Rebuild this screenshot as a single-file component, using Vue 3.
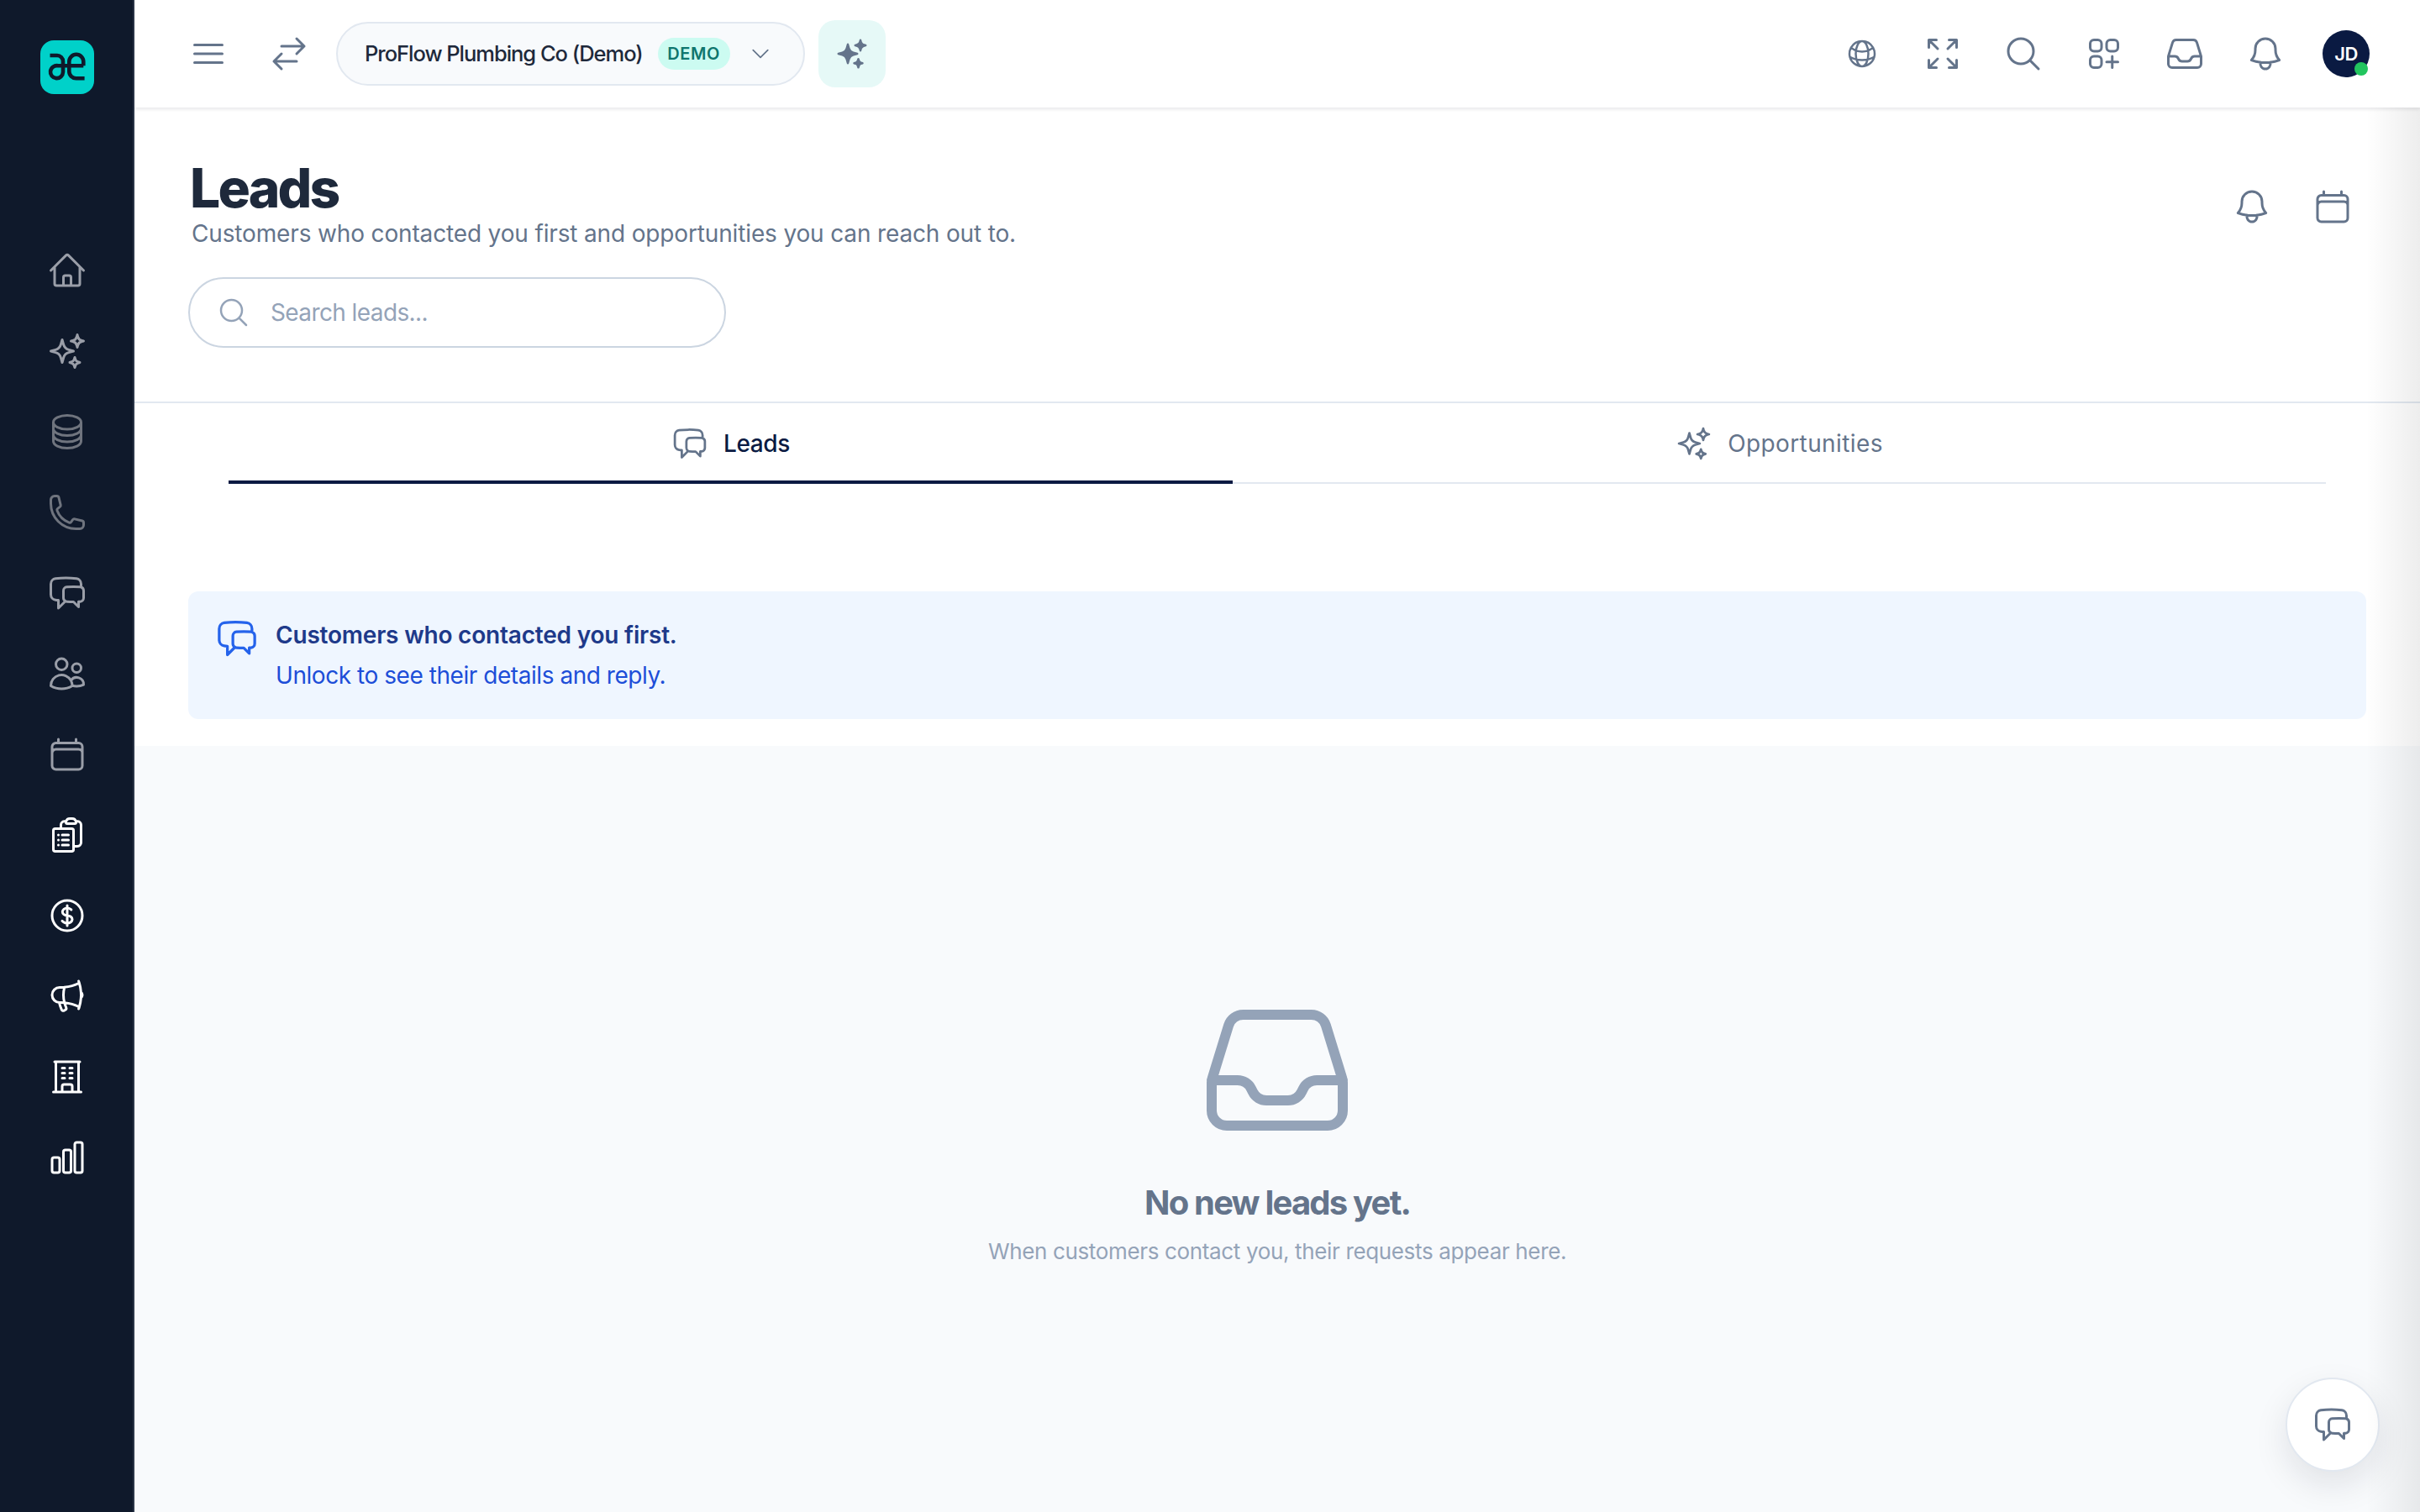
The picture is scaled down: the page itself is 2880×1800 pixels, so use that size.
<template>
  <div class="app">
    <aside class="sidebar">
      <div class="logo">
        <svg viewBox="0 0 64 64" class="logo-mark">
          <path d="M11.5 18H20a7 7 0 0 1 7 7v13M51.3 30.3H21a7.5 7.5 0 1 0 6 7.5M51.3 30.3v-5a8.5 8.5 0 0 0-17 0V37a8.3 8.3 0 0 0 8.3 8.3h10" />
        </svg>
      </div>
      <nav class="nav">
        <a v-for="item in navItems" :key="item.name" class="nav-item" :class="item.tone">
          <svg class="ic" viewBox="0 0 24 24"><path :d="icons[item.name]" /></svg>
        </a>
      </nav>
    </aside>

    <div class="main">
      <header class="topbar">
        <button type="button" class="top-btn"><svg class="ic" viewBox="0 0 24 24"><path :d="icons.menu" /></svg></button>
        <button type="button" class="top-btn swap"><svg class="ic" viewBox="0 0 24 24"><path :d="icons.swap" /></svg></button>
        <div class="company">
          <span class="company-name">ProFlow Plumbing Co (Demo)</span>
          <span class="badge">DEMO</span>
          <svg class="ic chevron" viewBox="0 0 24 24"><path :d="icons.chevron" /></svg>
        </div>
        <button type="button" class="spark-btn">
          <svg viewBox="0 0 24 24" class="spark-solid"><path :d="icons.sparkSolid" /></svg>
        </button>
        <div class="top-right">
          <button type="button" class="top-btn"><svg class="ic globe" viewBox="0 0 24 24"><path :d="icons.globe" /></svg></button>
          <button v-for="name in topIcons" :key="name" type="button" class="top-btn">
            <svg class="ic" viewBox="0 0 24 24"><path :d="icons[name]" /></svg>
          </button>
          <div class="avatar">JD<span class="status"></span></div>
        </div>
      </header>

      <section class="page-head">
        <div>
          <h1>Leads</h1>
          <p class="subtitle">Customers who contacted you first and opportunities you can reach out to.</p>
          <label class="search">
            <svg class="ic search-ic" viewBox="0 0 24 24"><path :d="icons.search" /></svg>
            <input type="text" placeholder="Search leads..." />
          </label>
        </div>
        <div class="head-actions">
          <button type="button" class="top-btn"><svg class="ic" viewBox="0 0 24 24"><path :d="icons.bell" /></svg></button>
          <button type="button" class="top-btn"><svg class="ic" viewBox="0 0 24 24"><path :d="icons.calendar" /></svg></button>
        </div>
      </section>

      <section class="tabs-area">
        <div class="tabs">
          <button type="button" class="tab active">
            <svg class="ic tab-ic" viewBox="0 0 24 24"><path :d="icons.chat" /></svg>
            Leads
          </button>
          <button type="button" class="tab">
            <svg class="ic tab-ic" viewBox="0 0 24 24"><path :d="icons.sparkles" /></svg>
            Opportunities
          </button>
        </div>
        <div class="info">
          <svg class="ic info-ic" viewBox="0 0 24 24"><path :d="icons.chat" /></svg>
          <div>
            <p class="info-title">Customers who contacted you first.</p>
            <p class="info-text">Unlock to see their details and reply.</p>
          </div>
        </div>
      </section>

      <section class="empty">
        <svg class="ic empty-ic" viewBox="0 0 24 24"><path :d="icons.inbox" /></svg>
        <h2>No new leads yet.</h2>
        <p>When customers contact you, their requests appear here.</p>
      </section>
    </div>

    <button type="button" class="fab"><svg class="ic" viewBox="0 0 24 24"><path :d="icons.chat" /></svg></button>
    <div class="edge-shade"></div>
  </div>
</template>

<script setup>
const icons = {
  home: 'm2.25 12 8.954-8.955c.44-.439 1.152-.439 1.591 0L21.75 12M4.5 9.75v10.125c0 .621.504 1.125 1.125 1.125H9.75v-4.875c0-.621.504-1.125 1.125-1.125h2.25c.621 0 1.125.504 1.125 1.125V21h4.125c.621 0 1.125-.504 1.125-1.125V9.75M8.25 21h8.25',
  sparkles: 'M9.813 15.904 9 18.75l-.813-2.846a4.5 4.5 0 0 0-3.09-3.09L2.25 12l2.846-.813a4.5 4.5 0 0 0 3.09-3.09L9 5.25l.813 2.846a4.5 4.5 0 0 0 3.09 3.09L15.75 12l-2.846.813a4.5 4.5 0 0 0-3.09 3.09ZM18.259 8.715 18 9.75l-.259-1.035a3.375 3.375 0 0 0-2.455-2.456L14.25 6l1.036-.259a3.375 3.375 0 0 0 2.455-2.456L18 2.25l.259 1.035a3.375 3.375 0 0 0 2.456 2.456L21.75 6l-1.035.259a3.375 3.375 0 0 0-2.456 2.456ZM16.894 20.567 16.5 21.75l-.394-1.183a2.25 2.25 0 0 0-1.423-1.423L13.5 18.75l1.183-.394a2.25 2.25 0 0 0 1.423-1.423l.394-1.183.394 1.183a2.25 2.25 0 0 0 1.423 1.423l1.183.394-1.183.394a2.25 2.25 0 0 0-1.423 1.423Z',
  database: 'M20.25 6.375c0 2.278-3.694 4.125-8.25 4.125S3.75 8.653 3.75 6.375m16.5 0c0-2.278-3.694-4.125-8.25-4.125S3.75 4.097 3.75 6.375m16.5 0v11.25c0 2.278-3.694 4.125-8.25 4.125s-8.25-1.847-8.25-4.125V6.375m16.5 0v3.75m-16.5-3.75v3.75m16.5 0v3.75C20.25 16.153 16.556 18 12 18s-8.25-1.847-8.25-4.125v-3.75m16.5 0c0 2.278-3.694 4.125-8.25 4.125s-8.25-1.847-8.25-4.125',
  phone: 'M2.25 6.75c0 8.284 6.716 15 15 15h2.25a2.25 2.25 0 0 0 2.25-2.25v-1.372c0-.516-.351-.966-.852-1.091l-4.423-1.106c-.44-.11-.902.055-1.173.417l-.97 1.293c-.282.376-.769.542-1.21.38a12.035 12.035 0 0 1-7.143-7.143c-.162-.441.004-.928.38-1.21l1.293-.97c.363-.271.527-.734.417-1.173L6.963 3.102a1.125 1.125 0 0 0-1.091-.852H4.5A2.25 2.25 0 0 0 2.25 4.5v2.25Z',
  chat: 'M20.25 8.511c.884.284 1.5 1.128 1.5 2.097v4.286c0 1.136-.847 2.1-1.98 2.193-.34.027-.68.052-1.02.072v3.091l-3-3c-1.354 0-2.694-.055-4.02-.163a2.115 2.115 0 0 1-.825-.242m9.345-8.334a2.126 2.126 0 0 0-.476-.095 48.64 48.64 0 0 0-8.048 0c-1.131.094-1.976 1.057-1.976 2.192v4.286c0 .837.46 1.58 1.155 1.951m9.345-8.334V6.637c0-1.621-1.152-3.026-2.76-3.235A48.455 48.455 0 0 0 11.25 3c-2.115 0-4.198.137-6.24.402-1.608.209-2.76 1.614-2.76 3.235v6.226c0 1.621 1.152 3.026 2.76 3.235.577.075 1.157.14 1.74.194V21l4.155-4.155',
  users: 'M15 19.128a9.38 9.38 0 0 0 2.625.372 9.337 9.337 0 0 0 4.121-.952 4.125 4.125 0 0 0-7.533-2.493M15 19.128v-.003c0-1.113-.285-2.16-.786-3.07M15 19.128v.106A12.318 12.318 0 0 1 8.624 21c-2.331 0-4.512-.645-6.374-1.766l-.001-.109a6.375 6.375 0 0 1 11.964-3.07M12 6.375a3.375 3.375 0 1 1-6.75 0 3.375 3.375 0 0 1 6.75 0Zm8.25 2.25a2.625 2.625 0 1 1-5.25 0 2.625 2.625 0 0 1 5.25 0Z',
  calendar: 'M6.75 3v2.25M17.25 3v2.25M3 18.75V7.5a2.25 2.25 0 0 1 2.25-2.25h13.5A2.25 2.25 0 0 1 21 7.5v11.25m-18 0A2.25 2.25 0 0 0 5.25 21h13.5A2.25 2.25 0 0 0 21 18.75m-18 0v-7.5A2.25 2.25 0 0 1 5.25 9h13.5A2.25 2.25 0 0 1 21 11.25v7.5',
  clipboard: 'M9 12h3.75M9 15h3.75M9 18h3.75m3 .75H18a2.25 2.25 0 0 0 2.25-2.25V6.108c0-1.135-.845-2.098-1.976-2.192a48.424 48.424 0 0 0-1.123-.08m-5.801 0c-.065.21-.1.433-.1.664 0 .414.336.75.75.75h4.5a.75.75 0 0 0 .75-.75 2.25 2.25 0 0 0-.1-.664m-5.8 0A2.251 2.251 0 0 1 13.5 2.25H15c1.012 0 1.867.668 2.15 1.586m-5.8 0c-.376.023-.75.05-1.124.08C9.095 4.01 8.25 4.973 8.25 6.108V8.25m0 0H4.875c-.621 0-1.125.504-1.125 1.125v11.25c0 .621.504 1.125 1.125 1.125h9.75c.621 0 1.125-.504 1.125-1.125V9.375c0-.621-.504-1.125-1.125-1.125H8.25ZM6.75 12h.008v.008H6.75V12Zm0 3h.008v.008H6.75V15Zm0 3h.008v.008H6.75V18Z',
  dollar: 'M12 6v12m-3-2.818.879.659c1.171.879 3.07.879 4.242 0 1.172-.879 1.172-2.303 0-3.182C13.536 12.219 12.768 12 12 12c-.725 0-1.45-.22-2.003-.659-1.106-.879-1.106-2.303 0-3.182s2.9-.879 4.006 0l.415.33M21 12a9 9 0 1 1-18 0 9 9 0 0 1 18 0Z',
  megaphone: 'M10.34 15.84c-.688-.06-1.386-.09-2.09-.09H7.5a4.5 4.5 0 1 1 0-9h.75c.704 0 1.402-.03 2.09-.09m0 9.18c.253.962.584 1.892.985 2.783.247.55.06 1.21-.463 1.511l-.657.38c-.551.318-1.26.117-1.527-.461a20.845 20.845 0 0 1-1.44-4.282m3.102.069a18.03 18.03 0 0 1-.59-4.59c0-1.586.205-3.124.59-4.59m0 9.18a23.848 23.848 0 0 1 8.835 2.535M10.34 6.66a23.847 23.847 0 0 0 8.835-2.535m0 0A23.74 23.74 0 0 0 18.795 3m.38 1.125a23.91 23.91 0 0 1 1.014 5.395m-1.014 8.855c-.118.38-.245.754-.38 1.125m.38-1.125a23.91 23.91 0 0 0 1.014-5.395m0-3.46c.495.413.811 1.035.811 1.73 0 .695-.316 1.317-.811 1.73m0-3.46a24.347 24.347 0 0 1 0 3.46',
  building: 'M3.75 21h16.5M4.5 3h15M5.25 3v18m13.5-18v18M9 6.75h1.5m-1.5 3h1.5m-1.5 3h1.5m3-6H15m-1.5 3H15m-1.5 3H15M9 21v-3.375c0-.621.504-1.125 1.125-1.125h3.75c.621 0 1.125.504 1.125 1.125V21',
  chart: 'M3 13.125C3 12.504 3.504 12 4.125 12h2.25c.621 0 1.125.504 1.125 1.125v6.75C7.5 20.496 6.996 21 6.375 21h-2.25A1.125 1.125 0 0 1 3 19.875v-6.75ZM9.75 8.625c0-.621.504-1.125 1.125-1.125h2.25c.621 0 1.125.504 1.125 1.125v11.25c0 .621-.504 1.125-1.125 1.125h-2.25a1.125 1.125 0 0 1-1.125-1.125V8.625ZM16.5 4.125c0-.621.504-1.125 1.125-1.125h2.25C20.496 3 21 3.504 21 4.125v15.75c0 .621-.504 1.125-1.125 1.125h-2.25a1.125 1.125 0 0 1-1.125-1.125V4.125Z',
  menu: 'M3.75 6.75h16.5M3.75 12h16.5m-16.5 5.25h16.5',
  swap: 'M7.5 21 3 16.5m0 0L7.5 12M3 16.5h13.5m0-13.5L21 7.5m0 0L16.5 12M21 7.5H7.5',
  chevron: 'm19.5 8.25-7.5 7.5-7.5-7.5',
  globe: 'M12 21a9.004 9.004 0 0 0 8.716-6.747M12 21a9.004 9.004 0 0 1-8.716-6.747M12 21c2.485 0 4.5-4.03 4.5-9S14.485 3 12 3m0 18c-2.485 0-4.5-4.03-4.5-9S9.515 3 12 3m0 0a8.997 8.997 0 0 1 7.843 4.582M12 3a8.997 8.997 0 0 0-7.843 4.582m15.686 0A11.953 11.953 0 0 1 12 10.5c-2.998 0-5.74-1.1-7.843-2.918m15.686 0A8.959 8.959 0 0 1 21 12c0 .778-.099 1.533-.284 2.253m0 0A17.919 17.919 0 0 1 12 16.5c-3.162 0-6.133-.815-8.716-2.247m0 0A9.004 9.004 0 0 1 3 12c0-1.605.42-3.113 1.157-4.418',
  expand: 'M3.75 3.75v4.5m0-4.5h4.5m-4.5 0L9 9M3.75 20.25v-4.5m0 4.5h4.5m-4.5 0L9 15M20.25 3.75h-4.5m4.5 0v4.5m0-4.5L15 9m5.25 11.25h-4.5m4.5 0v-4.5m0 4.5L15 15',
  search: 'm21 21-5.197-5.197m0 0A7.5 7.5 0 1 0 5.196 5.196a7.5 7.5 0 0 0 10.607 10.607Z',
  apps: 'M13.5 16.875h3.375m0 0h3.375m-3.375 0V13.5m0 3.375v3.375M6 10.5h2.25a2.25 2.25 0 0 0 2.25-2.25V6a2.25 2.25 0 0 0-2.25-2.25H6A2.25 2.25 0 0 0 3.75 6v2.25A2.25 2.25 0 0 0 6 10.5Zm0 9.75h2.25A2.25 2.25 0 0 0 10.5 18v-2.25a2.25 2.25 0 0 0-2.25-2.25H6a2.25 2.25 0 0 0-2.25 2.25V18A2.25 2.25 0 0 0 6 20.25Zm9.75-9.75H18a2.25 2.25 0 0 0 2.25-2.25V6A2.25 2.25 0 0 0 18 3.75h-2.25A2.25 2.25 0 0 0 13.5 6v2.25a2.25 2.25 0 0 0 2.25 2.25Z',
  inbox: 'M2.25 13.5h3.86a2.25 2.25 0 0 1 2.012 1.244l.256.512a2.25 2.25 0 0 0 2.013 1.244h3.218a2.25 2.25 0 0 0 2.013-1.244l.256-.512a2.25 2.25 0 0 1 2.013-1.244h3.859m-19.5.338V18a2.25 2.25 0 0 0 2.25 2.25h15A2.25 2.25 0 0 0 21.75 18v-4.162c0-.224-.034-.447-.1-.661L19.24 5.338a2.25 2.25 0 0 0-2.15-1.588H6.911a2.25 2.25 0 0 0-2.15 1.588L2.35 13.177a2.25 2.25 0 0 0-.1.661Z',
  bell: 'M14.857 17.082a23.848 23.848 0 0 0 5.454-1.31A8.967 8.967 0 0 1 18 9.75V9A6 6 0 0 0 6 9v.75a8.967 8.967 0 0 1-2.312 6.022c1.733.64 3.56 1.085 5.455 1.31m5.714 0a24.255 24.255 0 0 1-5.714 0m5.714 0a3 3 0 1 1-5.714 0',
  sparkSolid: 'M9 4.5a.75.75 0 0 1 .721.544l.813 2.846a3.75 3.75 0 0 0 2.576 2.576l2.846.813a.75.75 0 0 1 0 1.442l-2.846.813a3.75 3.75 0 0 0-2.576 2.576l-.813 2.846a.75.75 0 0 1-1.442 0l-.813-2.846a3.75 3.75 0 0 0-2.576-2.576l-2.846-.813a.75.75 0 0 1 0-1.442l2.846-.813A3.75 3.75 0 0 0 7.466 7.89l.813-2.846A.75.75 0 0 1 9 4.5ZM18 1.5a.75.75 0 0 1 .728.568l.258 1.036c.236.94.97 1.674 1.91 1.91l1.036.258a.75.75 0 0 1 0 1.456l-1.036.258c-.94.236-1.674.97-1.91 1.91l-.258 1.036a.75.75 0 0 1-1.456 0l-.258-1.036a2.625 2.625 0 0 0-1.91-1.91l-1.036-.258a.75.75 0 0 1 0-1.456l1.036-.258a2.625 2.625 0 0 0 1.91-1.91l.258-1.036A.75.75 0 0 1 18 1.5ZM16.5 15a.75.75 0 0 1 .712.513l.394 1.183c.15.447.5.799.948.948l1.183.395a.75.75 0 0 1 0 1.422l-1.183.395c-.447.15-.799.5-.948.948l-.395 1.183a.75.75 0 0 1-1.422 0l-.395-1.183a1.5 1.5 0 0 0-.948-.948l-1.183-.395a.75.75 0 0 1 0-1.422l1.183-.395c.447-.15.799-.5.948-.948l.395-1.183A.75.75 0 0 1 16.5 15Z'
}

const navItems = [
  { name: 'home', tone: 'mid' },
  { name: 'sparkles', tone: 'mid' },
  { name: 'database', tone: 'dim' },
  { name: 'phone', tone: 'dim' },
  { name: 'chat', tone: 'mid' },
  { name: 'users', tone: 'mid' },
  { name: 'calendar', tone: 'mid' },
  { name: 'clipboard', tone: 'bright' },
  { name: 'dollar', tone: 'bright' },
  { name: 'megaphone', tone: 'bright' },
  { name: 'building', tone: 'bright' },
  { name: 'chart', tone: 'bright' }
]

const topIcons = ['expand', 'search', 'apps', 'inbox', 'bell']
</script>

<style>
html, body { margin: 0; background: #fff; }
</style>

<style scoped>
* { box-sizing: border-box; }

.app {
  position: relative; display: flex; height: 100vh; overflow: hidden;
  font-family: Inter, "Liberation Sans", sans-serif; color: #1e293b; letter-spacing: -.15px;
}

.ic { display: block; width: 48px; height: 48px; fill: none; stroke: currentColor; stroke-width: 1.5; stroke-linecap: round; stroke-linejoin: round; }

/* sidebar */
.sidebar { flex: 0 0 160px; background: #0f192b; border-right: 2px solid #2a3547; }
.logo { width: 64px; height: 64px; margin: 48px 0 0 48px; border-radius: 16px; background: #00d1c9; }
.logo-mark { display: block; width: 64px; height: 64px; fill: none; stroke: #0f192b; stroke-width: 4.6; stroke-linejoin: round; }
.nav { display: flex; flex-direction: column; align-items: center; gap: 48px; margin-top: 186px; padding-left: 2px; }
.nav-item { display: block; height: 48px; }
.nav-item.mid { color: #9a9ea8; }
.nav-item.dim { color: #6f747e; }
.nav-item.bright { color: #fff; }

.main { flex: 1; min-width: 0; display: flex; flex-direction: column; }

/* topbar */
.topbar {
  position: relative; z-index: 2; flex: 0 0 128px; display: flex; align-items: center; padding: 0 60px 0 64px;
  background: #fff; box-shadow: 0 2px 4px rgba(15, 23, 42, .1);
}
.top-btn { display: block; padding: 0; border: none; background: none; color: #64748b; cursor: pointer; }
.swap { margin-left: 48px; }
.company {
  display: flex; align-items: center; width: 558px; height: 76px; margin-left: 32px; padding-left: 32px;
  background: #f8fafc; border: 2px solid #e2e8f0; border-radius: 38px;
}
.company-name { margin-top: -2px; font-size: 25.5px; font-weight: 500; letter-spacing: -1.03px; white-space: nowrap; }
.badge {
  display: flex; align-items: center; justify-content: center; width: 86px; height: 38px; margin-left: 18px;
  background: #ccfbf1; border-radius: 19px; color: #0f766e; font-size: 20px; font-weight: 600; letter-spacing: .6px;
}
.chevron { width: 28px; height: 28px; margin-left: 22px; color: #64748b; }
.spark-btn {
  display: flex; align-items: center; justify-content: center; width: 80px; height: 80px; margin-left: 16px; padding: 0;
  border: none; border-radius: 20px; background: #e6f9f7; cursor: pointer;
}
.spark-solid { width: 40px; height: 40px; fill: #64748b; }
.top-right { display: flex; align-items: center; gap: 48px; margin-left: auto; }
.globe { width: 40px; height: 40px; margin: 0 4px; }
.avatar {
  position: relative; display: flex; align-items: center; justify-content: center; width: 56px; height: 56px; margin-left: -4px;
  border-radius: 50%; background: #0a1a42; color: #fff; font-size: 22px; font-weight: 600; letter-spacing: -.5px;
}
.status { position: absolute; right: 2px; bottom: 2px; width: 16px; height: 16px; border-radius: 50%; background: #22c55e; }

/* heading */
.page-head {
  display: flex; justify-content: space-between; padding: 60px 80px 64px 64px;
  background: #fff; border-bottom: 2px solid #e2e8f0;
}
h1 { margin: 0 0 0 2px; font-size: 64px; line-height: 72px; font-weight: 800; letter-spacing: -2.8px; }
.subtitle { margin: 1px 0 0 4px; font-size: 28px; line-height: 34px; color: #64748b; }
.search {
  display: flex; align-items: center; width: 640px; height: 84px; margin-top: 35px; padding-left: 32px;
  border: 2px solid #cbd5e1; border-radius: 42px; background: #fff;
}
.search-ic { width: 40px; height: 40px; color: #94a3b8; flex: none; }
.search input {
  flex: 1; min-width: 0; margin-left: 22px; border: none; outline: none; background: none;
  font: inherit; font-size: 28px; letter-spacing: -.6px; color: #1e293b;
}
.search input::placeholder { color: #94a3b8; opacity: 1; }
.head-actions { display: flex; gap: 48px; margin-top: 34px; align-self: flex-start; }

/* tabs and notice */
.tabs-area { padding: 0 64px 32px; background: #fff; }
.tabs { display: flex; height: 96px; margin: 0 48px; border-bottom: 2px solid #e2e8f0; }
.tab {
  flex: 1 1 auto; display: flex; align-items: center; justify-content: center; gap: 18px; height: 96px; padding: 0;
  border: none; background: none; font: inherit; font-size: 28px; font-weight: 400; letter-spacing: .4px; color: #64748b; cursor: pointer;
}
.tab.active { box-shadow: inset 0 -4px #0a1a42; color: #0a1a42; font-weight: 500; letter-spacing: -.4px; }
.tab-ic { width: 44px; height: 44px; color: #64748b; }
.info {
  display: flex; gap: 20px; height: 152px; margin-top: 128px; padding: 28px 0 0 32px;
  background: #eff6ff; border-radius: 12px;
}
.info-ic { width: 52px; height: 52px; margin-top: 2px; color: #2563eb; flex: none; }
.info p { margin: 0; font-size: 28px; line-height: 48px; }
.info-title { font-weight: 600; color: #1e3a8a; letter-spacing: -.2px; }
.info-text { color: #1d4ed8; letter-spacing: -.45px; }

/* empty */
.empty { flex: 1; display: flex; flex-direction: column; align-items: center; padding-top: 290px; background: #f8fafc; }
.empty-ic { width: 192px; height: 192px; color: #94a3b8; }
.empty h2 { margin: 34px 0 0; font-size: 40px; line-height: 56px; font-weight: 700; letter-spacing: -1.8px; color: #64748b; }
.empty p { margin: 12px 0 0; font-size: 26px; line-height: 36px; letter-spacing: -.35px; color: #94a3b8; }

.fab {
  position: absolute; left: 2720px; top: 1640px; display: flex; align-items: center; justify-content: center;
  width: 112px; height: 112px; padding: 0; border: 2px solid #e2e8f0; border-radius: 50%; background: #fff; color: #64748b;
  box-shadow: 0 16px 40px rgba(15, 23, 42, .1);
}
.edge-shade {
  position: absolute; top: 0; right: 0; bottom: 0; width: 64px; pointer-events: none;
  background: linear-gradient(to right, rgba(0, 0, 0, 0), rgba(0, 0, 0, .07));
}
</style>
